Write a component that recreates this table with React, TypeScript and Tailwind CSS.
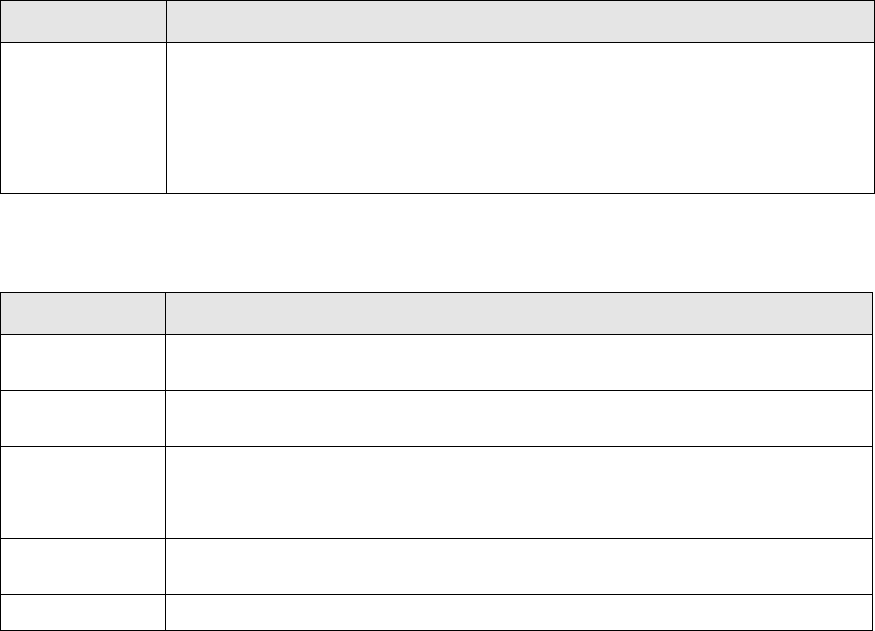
const rows = [56, 56, 92, 56, 36];

function HeaderCells() {
  return (
    <>
      <div className="h-[42px] bg-[#e5e5e5] border-r border-b border-black" />
      <div className="h-[42px] bg-[#e5e5e5] border-r border-b border-black" />
    </>
  );
}

export default function App() {
  return (
    <div className="w-[875px] h-[631px] bg-white overflow-hidden font-['Liberation_Sans',sans-serif]">
      <div className="w-[875px] grid grid-cols-[166px_1fr] border-t border-l border-black">
        <HeaderCells />
        <div className="h-[151px] border-r border-b border-black" />
        <div className="h-[151px] border-r border-b border-black" />
      </div>

      <div className="mt-[98px] w-[873px] grid grid-cols-[165px_1fr] border-t border-l border-black">
        <HeaderCells />
        {rows.map((h, i) => (
          <div key={i} className="contents">
            <div className="border-r border-b border-black" style={{ height: h }} />
            <div className="border-r border-b border-black" style={{ height: h }} />
          </div>
        ))}
      </div>
    </div>
  );
}
